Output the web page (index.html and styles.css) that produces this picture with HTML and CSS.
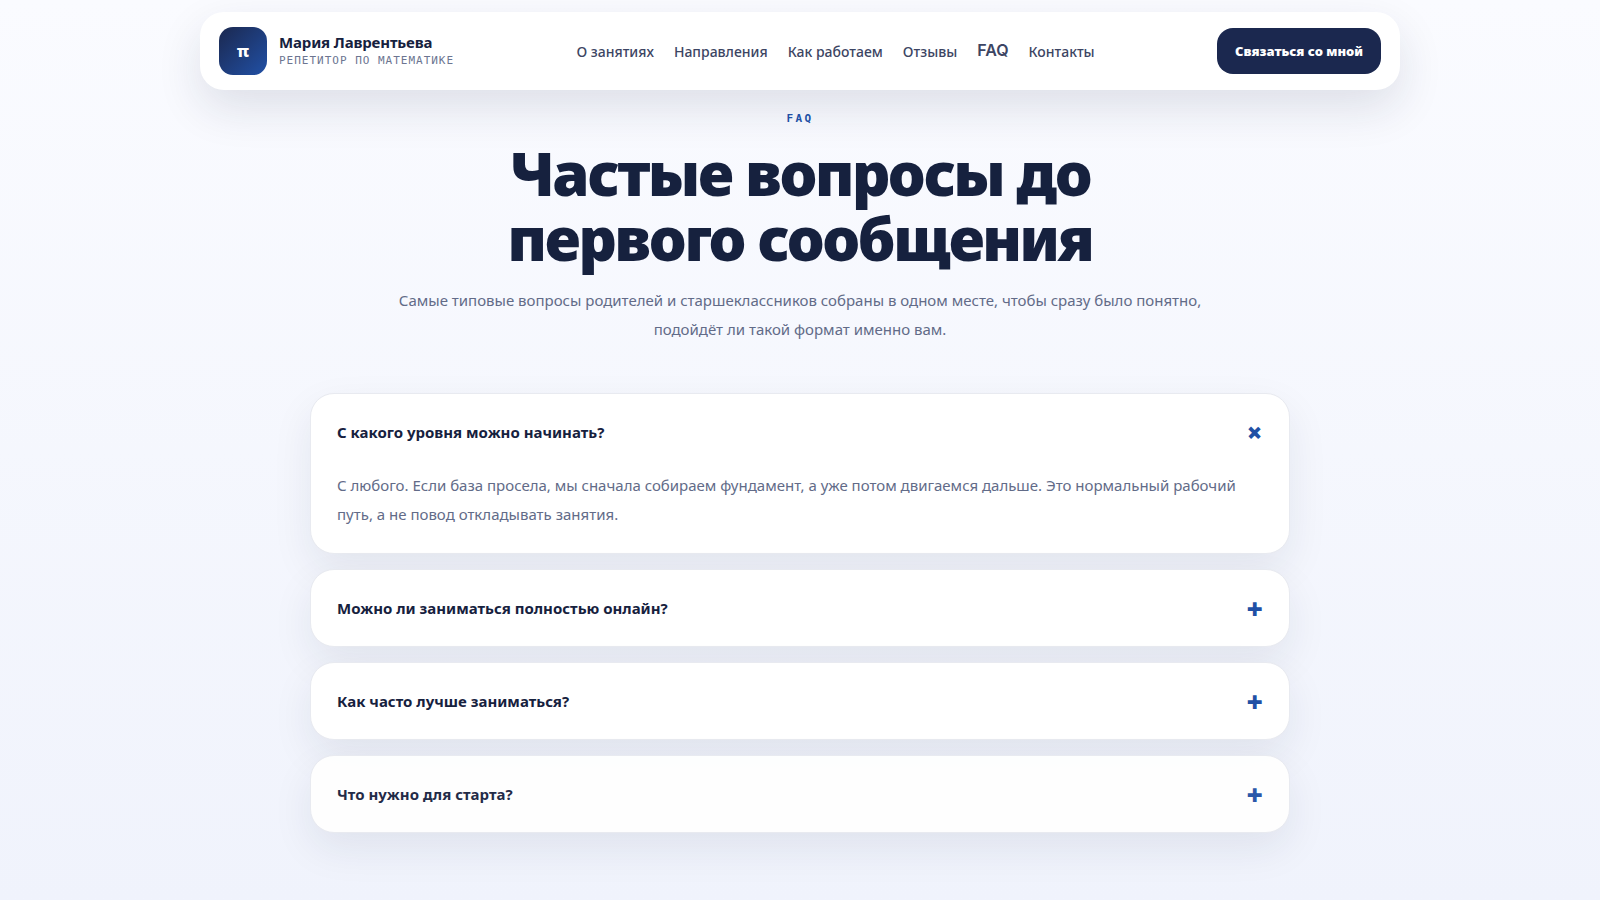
FILE: index.html
```html
<!DOCTYPE html>
<html lang="ru">
<head>
    <meta charset="UTF-8">
    <meta name="viewport" content="width=device-width, initial-scale=1.0">
    <title>Мария Лаврентьева - репетитор по математике</title>
    <link rel="stylesheet" href="styles.css">
</head>
<body>
    <!-- Header -->
    <header class="header">
        <a href="#top" class="brand">
            <span class="brand-mark">π</span>
            <span class="brand-text">
                <span class="brand-name">Мария Лаврентьева</span>
                <span class="brand-role">репетитор по математике</span>
            </span>
        </a>
        <nav class="nav">
            <a href="#about">О занятиях</a>
            <a href="#directions">Направления</a>
            <a href="#process">Как работаем</a>
            <a href="#reviews">Отзывы</a>
            <a href="#faq" class="active">FAQ</a>
            <a href="#contacts">Контакты</a>
        </nav>
        <button type="button" class="btn btn-primary">Связаться со мной</button>
    </header>

    <!-- FAQ -->
    <main class="section" id="faq">
        <div class="section-head">
            <p class="eyebrow">FAQ</p>
            <h1>Частые вопросы до первого сообщения</h1>
            <p class="lead">Самые типовые вопросы родителей и старшеклассников собраны в одном месте, чтобы сразу было понятно, подойдёт ли такой формат именно вам.</p>
        </div>

        <div class="faq-list">
            <details class="faq-item" open>
                <summary>С какого уровня можно начинать?</summary>
                <p>С любого. Если база просела, мы сначала собираем фундамент, а уже потом двигаемся дальше. Это нормальный рабочий путь, а не повод откладывать занятия.</p>
            </details>
            <details class="faq-item">
                <summary>Можно ли заниматься полностью онлайн?</summary>
                <p>Да, все занятия можно проводить онлайн.</p>
            </details>
            <details class="faq-item">
                <summary>Как часто лучше заниматься?</summary>
                <p>Обычно один или два раза в неделю.</p>
            </details>
            <details class="faq-item faq-item-fade">
                <summary>Что нужно для старта?</summary>
                <p>Достаточно написать мне и рассказать о цели.</p>
            </details>
        </div>
    </main>
</body>
</html>
```
FILE: styles.css
```css
* { box-sizing: border-box; }
body { font-family: 'Noto Sans', sans-serif; margin: 0; padding: 12px 20px 0; min-height: 100vh; color: #16213e; background: linear-gradient(180deg, #fafbff, #f0f3fc); }
h1, p { margin: 0; }
a { color: inherit; text-decoration: none; }

.header { max-width: 1200px; margin: 0 auto; padding: 15px 19px; display: flex; align-items: center; justify-content: space-between; background: white; border-radius: 24px; box-shadow: 0 18px 45px rgba(22,33,62,0.12); }
.brand { display: flex; align-items: center; gap: 12px; }
.brand-mark { width: 48px; height: 48px; display: grid; place-items: center; border-radius: 14px; background: linear-gradient(135deg, #1b284f, #2150a5); color: white; font-size: 16px; font-weight: 800; }
.brand-text { display: flex; flex-direction: column; }
.brand-name { font-size: 15px; line-height: 20px; font-weight: 700; letter-spacing: -0.01em; }
.brand-role { font-family: 'DejaVu Sans Mono', monospace; font-size: 11px; line-height: 18px; letter-spacing: 0.09em; text-transform: uppercase; color: #6c7591; }
.nav { display: flex; gap: 20px; padding-top: 2px; font-size: 14px; line-height: 22px; font-weight: 500; color: #3c4563; }
.nav .active { font-family: Inter, sans-serif; font-size: 16px; font-weight: 600; transform: translateY(-2px); }
.btn { padding: 13px 18px; border: none; border-radius: 16px; font-family: inherit; font-size: 13px; line-height: 20px; font-weight: 900; cursor: pointer; }
.btn-primary { background: #1b284f; color: white; }

.section { max-width: 980px; margin: 0 auto; padding: 19px 0 68px; }
.section-head { max-width: 820px; margin: 0 auto 49px; text-align: center; }
.eyebrow { font-family: 'DejaVu Sans Mono', monospace; font-size: 11px; line-height: 20px; font-weight: 700; letter-spacing: 0.22em; color: #2150a5; }
h1 { max-width: 700px; margin: 12px auto 15px; font-size: 60px; line-height: 65px; font-weight: 900; letter-spacing: -0.04em; }
.lead { font-size: 15px; line-height: 29px; color: #626b88; }

.faq-list { display: grid; gap: 15px; }
.faq-item { background: white; border: 1px solid #e8eaf0; border-radius: 24px; box-shadow: 0 16px 40px rgba(22,33,62,0.08); }
.faq-item summary { display: flex; justify-content: space-between; align-items: center; padding: 22px 26px; font-size: 15px; line-height: 32px; font-weight: 700; list-style: none; cursor: pointer; }
.faq-item summary::after { content: '+'; font-size: 28px; font-weight: 900; color: #2150a5; }
.faq-item[open] summary::after { transform: rotate(45deg); }
.faq-item p { padding: 1px 26px 24px; font-size: 15px; line-height: 29px; color: #626b88; }
.faq-item-fade { opacity: 0.95; }
```
